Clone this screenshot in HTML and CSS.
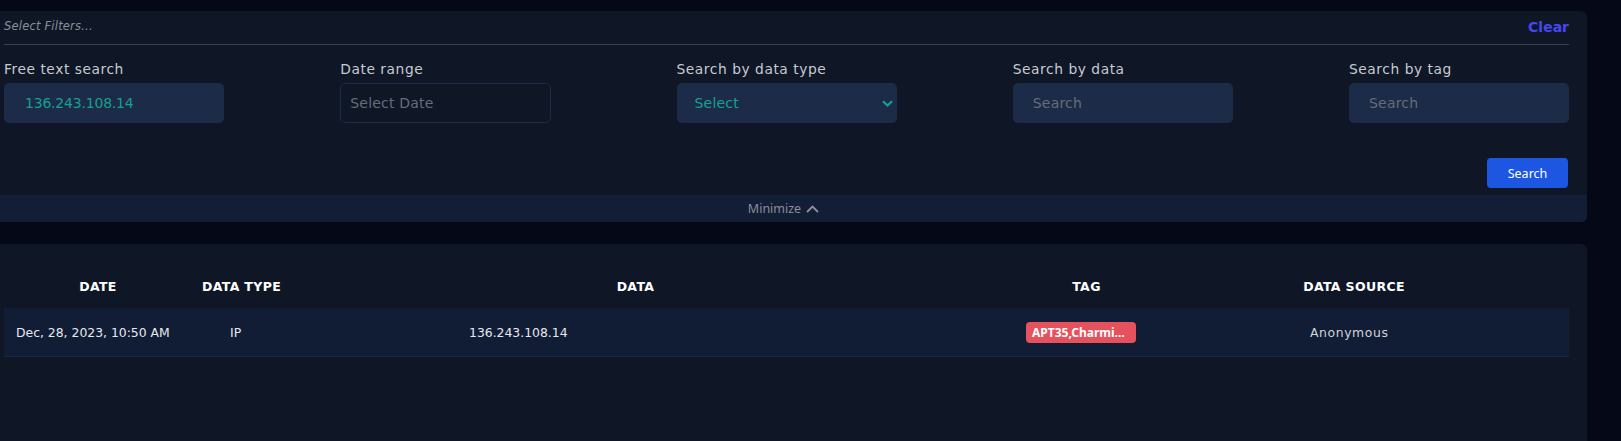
FILE: index.html
```html
<!DOCTYPE html>
<html lang="en">
<head>
<meta charset="utf-8">
<title>Filters</title>
<link rel="stylesheet" href="styles.css">
</head>
<body>
<div class="page">
  <section class="filters">
    <div class="filters-head">
      <span class="hint">Select Filters...</span>
      <a class="clear">Clear</a>
    </div>
    <div class="fields">
      <div class="field">
        <label class="label">Free text search</label>
        <input class="inp filled" value="136.243.108.14">
      </div>
      <div class="field">
        <label class="label">Date range</label>
        <input class="inp date" placeholder="Select Date">
      </div>
      <div class="field">
        <label class="label">Search by data type</label>
        <div class="inp select">
          <span>Select</span>
          <svg class="chev" width="11" height="7" viewBox="0 0 11 7"><path d="M1 1.2 L5.5 5.5 L10 1.2" fill="none" stroke="#14a192" stroke-width="2.2"/></svg>
        </div>
      </div>
      <div class="field">
        <label class="label">Search by data</label>
        <input class="inp" placeholder="Search">
      </div>
      <div class="field">
        <label class="label">Search by tag</label>
        <input class="inp" placeholder="Search">
      </div>
    </div>
    <div class="actions">
      <button class="btn">Search</button>
    </div>
    <div class="minimize">
      <span>Minimize</span>
      <svg width="13" height="8" viewBox="0 0 13 8"><path d="M1 7 L6.5 1.5 L12 7" fill="none" stroke="#8d9199" stroke-width="1.8"/></svg>
    </div>
  </section>

  <section class="results">
    <div class="thead">
      <div>DATE</div>
      <div>DATA TYPE</div>
      <div>DATA</div>
      <div>TAG</div>
      <div>DATA SOURCE</div>
    </div>
    <div class="trow">
      <div>Dec, 28, 2023, 10:50 AM</div>
      <div>IP</div>
      <div>136.243.108.14</div>
      <div><span class="badge">APT35,Charming Kitten</span></div>
      <div class="muted">Anonymous</div>
    </div>
  </section>
</div>
</body>
</html>
```

FILE: styles.css
```css
* { box-sizing: border-box; }

body {
  margin: 0;
  background: #050816;
  font-family: "DejaVu Sans", sans-serif;
}

.page {
  width: 1587px;
  padding-top: 11px;
}

.filters {
  background: #0f1727;
  border-radius: 0 6px 6px 0;
  overflow: hidden;
}

.filters-head {
  display: flex;
  justify-content: space-between;
  align-items: center;
  height: 34px;
  margin: 0 18px 0 4px;
  border-bottom: 1px solid #3a3f48;
}

.hint {
  font-style: italic;
  font-size: 11.5px;
  letter-spacing: 0.2px;
  color: #8a8f98;
  padding-bottom: 3px;
}

.clear {
  font-weight: 700;
  font-size: 14px;
  color: #4646f2;
  cursor: pointer;
  padding-bottom: 1px;
}

.fields {
  display: flex;
  justify-content: space-between;
  padding: 16px 18px 0 4px;
}

.field {
  width: 220px;
}

.label {
  display: block;
  font-size: 13.8px;
  letter-spacing: 0.55px;
  line-height: 17px;
  color: #c6cad1;
  margin-bottom: 5px;
}

.inp {
  display: block;
  width: 220px;
  height: 40px;
  border: 0;
  border-radius: 5px;
  background: #1c2b48;
  padding: 0 20px;
  font-family: "DejaVu Sans", sans-serif;
  font-size: 14px;
  letter-spacing: 0.2px;
  color: #c3c7ce;
  outline: none;
}

.inp::placeholder {
  color: #666c77;
}

.filled {
  color: #14a192;
  padding-left: 21px;
  letter-spacing: -0.2px;
}

.date {
  width: 211px;
  background: transparent;
  border: 1px solid #1d2b46;
  padding-left: 9px;
}

.select {
  display: flex;
  align-items: center;
  justify-content: space-between;
  padding: 0 4px 0 18px;
  color: #14a192;
}

.actions {
  display: flex;
  justify-content: flex-end;
  padding: 35px 19px 7px 0;
}

.btn {
  width: 81px;
  height: 30px;
  border: 0;
  border-radius: 4px;
  background: #1d56e0;
  color: #ffffff;
  font-family: "Noto Sans", sans-serif;
  font-size: 12.5px;
}

.minimize {
  height: 27px;
  background: #111e35;
  display: flex;
  justify-content: center;
  align-items: center;
  gap: 5px;
  padding-right: 20px;
  font-family: "Noto Sans", sans-serif;
  font-size: 12.5px;
  color: #8a8f98;
}

.results {
  margin-top: 22px;
  min-height: 200px;
  background: #0f1727;
  border-radius: 0 6px 0 0;
  padding: 20px 18px 0 4px;
}

.thead {
  display: grid;
  grid-template-columns: 188px 99px 689px 213px 322px;
  height: 44px;
  align-items: center;
  text-align: center;
  font-weight: 700;
  font-size: 12.5px;
  letter-spacing: 0.35px;
  color: #ffffff;
}

.trow {
  display: grid;
  grid-template-columns: 214px 239px 557px 284px 1fr;
  height: 49px;
  align-items: center;
  background: #101d35;
  border-bottom: 1px solid #1e2148;
  font-size: 12.4px;
  color: #e6e8ee;
}

.trow > div {
  padding-left: 12px;
}

.muted {
  color: #d0d3d9;
  letter-spacing: 0.6px;
}

.badge {
  display: block;
  width: 110px;
  height: 21px;
  line-height: 21px;
  padding: 0 6px;
  background: #e5525d;
  border-radius: 4px;
  color: #ffffff;
  font-family: "Noto Sans", sans-serif;
  font-weight: 700;
  font-size: 12px;
  white-space: nowrap;
  overflow: hidden;
  text-overflow: ellipsis;
}
```
